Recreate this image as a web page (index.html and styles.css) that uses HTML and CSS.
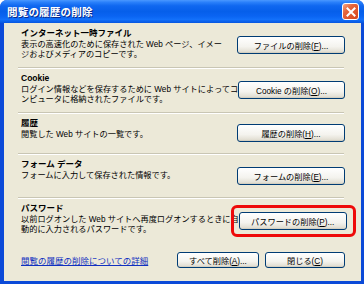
FILE: index.html
```html
<!DOCTYPE html>
<html lang="ja">

<head>
    <meta charset="UTF-8">
    <meta name="viewport" content="width=device-width, initial-scale=1.0">
    <title>閲覧の履歴の削除</title>
    <link rel="stylesheet" href="styles.css">
</head>

<body>
    <div class="window">
        <!-- Barra de título -->
        <div class="titlebar">
            <span class="title">閲覧の履歴の削除</span>
            <span class="close-btn">
                <svg width="10" height="10" viewBox="0 0 10 10">
                    <path d="M1.5 1.5 L8.5 8.5 M8.5 1.5 L1.5 8.5" stroke="#fff" stroke-width="2" stroke-linecap="square" />
                </svg>
            </span>
        </div>

        <div class="client">
            <div class="group g-temp">
                <div class="group-text">
                    <h2>インターネット一時ファイル</h2>
                    <p>表示の高速化のために保存された Web ページ、イメー<br>ジおよびメディアのコピーです。</p>
                </div>
                <button class="xp-btn">ファイルの削除(<u>F</u>)...</button>
            </div>

            <div class="group g-cookie">
                <div class="group-text">
                    <h2>Cookie</h2>
                    <p>ログイン情報などを保存するために Web サイトによってコ<br>ンピュータに格納されたファイルです。</p>
                </div>
                <button class="xp-btn">Cookie の削除(<u>O</u>)...</button>
            </div>

            <div class="group g-history">
                <div class="group-text">
                    <h2>履歴</h2>
                    <p>閲覧した Web サイトの一覧です。</p>
                </div>
                <button class="xp-btn">履歴の削除(<u>H</u>)...</button>
            </div>

            <div class="group g-form">
                <div class="group-text">
                    <h2>フォーム データ</h2>
                    <p>フォームに入力して保存された情報です。</p>
                </div>
                <button class="xp-btn">フォームの削除(<u>E</u>)...</button>
            </div>

            <div class="group g-password">
                <div class="group-text">
                    <h2>パスワード</h2>
                    <p>以前ログオンした Web サイトへ再度ログオンするときに自<br>動的に入力されるパスワードです。</p>
                </div>
                <div class="highlight">
                    <button class="xp-btn">パスワードの削除(<u>P</u>)...</button>
                </div>
            </div>

            <div class="footer">
                <a href="#" class="help-link">閲覧の履歴の削除についての詳細</a>
                <button class="xp-btn btn-all">すべて削除(<u>A</u>)...</button>
                <button class="xp-btn btn-close">閉じる(<u>C</u>)</button>
            </div>
        </div>
    </div>
</body>

</html>
```

FILE: styles.css
```css
* {
    box-sizing: border-box;
    margin: 0;
    padding: 0;
}

body {
    font-family: "Liberation Sans", "Noto Sans CJK JP", sans-serif;
    background-color: #fff;
    width: 364px;
    height: 284px;
    overflow: hidden;
}

.window {
    width: 364px;
    height: 284px;
    display: flex;
    flex-direction: column;
    background-color: #0b4ad8;
    border-radius: 7px 7px 0 0;
}

.titlebar {
    height: 23px;
    flex-shrink: 0;
    display: flex;
    align-items: center;
    justify-content: space-between;
    padding: 0 5px 0 7px;
    border-radius: 7px 7px 0 0;
    background: linear-gradient(#4a98ff 0%, #2a80fa 10%, #1068f0 25%, #065fea 50%, #0a64f2 70%, #1270fa 85%, #0656e0 100%);
}

.title {
    color: #fff;
    font-size: 10.5px;
    font-weight: bold;
    letter-spacing: 0.2px;
    text-shadow: 1px 1px 0 #0a2a8a;
}

.close-btn {
    width: 17px;
    height: 17px;
    display: flex;
    align-items: center;
    justify-content: center;
    border: 1px solid #fff;
    border-radius: 3px;
    background: linear-gradient(135deg, #f4a585 0%, #e5653c 35%, #d6441c 100%);
}

.client {
    flex: 1;
    margin: 0 3px 3px 4px;
    background-color: #ece9d8;
    padding: 0 17px 0 14px;
    display: flex;
    flex-direction: column;
}

.group {
    display: flex;
    align-items: center;
    justify-content: space-between;
    border-bottom: 1px solid #c9c6b4;
    box-shadow: 0 1px 0 #fff;
    height: 44px;
}

.g-temp {
    height: 45px;
}

.g-cookie {
    height: 45px;
}

.g-history {
    height: 41px;
}

.g-password {
    border-bottom: none;
    box-shadow: none;
}

.group-text {
    align-self: flex-start;
    padding: 5px 0 0 3px;
    white-space: nowrap;
}

.group-text h2 {
    font-size: 8.5px;
    font-weight: bold;
    line-height: 11px;
    color: #000;
    margin-bottom: 1px;
}

.group-text p {
    font-size: 8.2px;
    line-height: 10px;
    color: #000;
}

.xp-btn {
    width: 108px;
    height: 18px;
    font-family: inherit;
    font-size: 8.2px;
    color: #000;
    border: 1px solid #003c74;
    border-radius: 3px;
    background: linear-gradient(#ffffff 0%, #f4f3ee 60%, #e3e0d5 90%, #cdc8b8 100%);
    margin-right: -1px;
    cursor: pointer;
}

.highlight {
    position: relative;
}

.highlight::after {
    content: "";
    position: absolute;
    top: -6px;
    bottom: -7px;
    left: -8px;
    right: -10px;
    border: 3px solid #ee0a0a;
    border-radius: 6px;
}

.footer {
    flex: 1;
    display: flex;
    align-items: center;
    gap: 7px;
    padding: 0 0 4px 3px;
}

.help-link {
    flex: 1;
    font-size: 8.5px;
    color: #1030c0;
    text-decoration: underline;
}

.btn-all {
    width: 82px;
    height: 16px;
}

.btn-close {
    width: 80px;
    height: 16px;
}
```
